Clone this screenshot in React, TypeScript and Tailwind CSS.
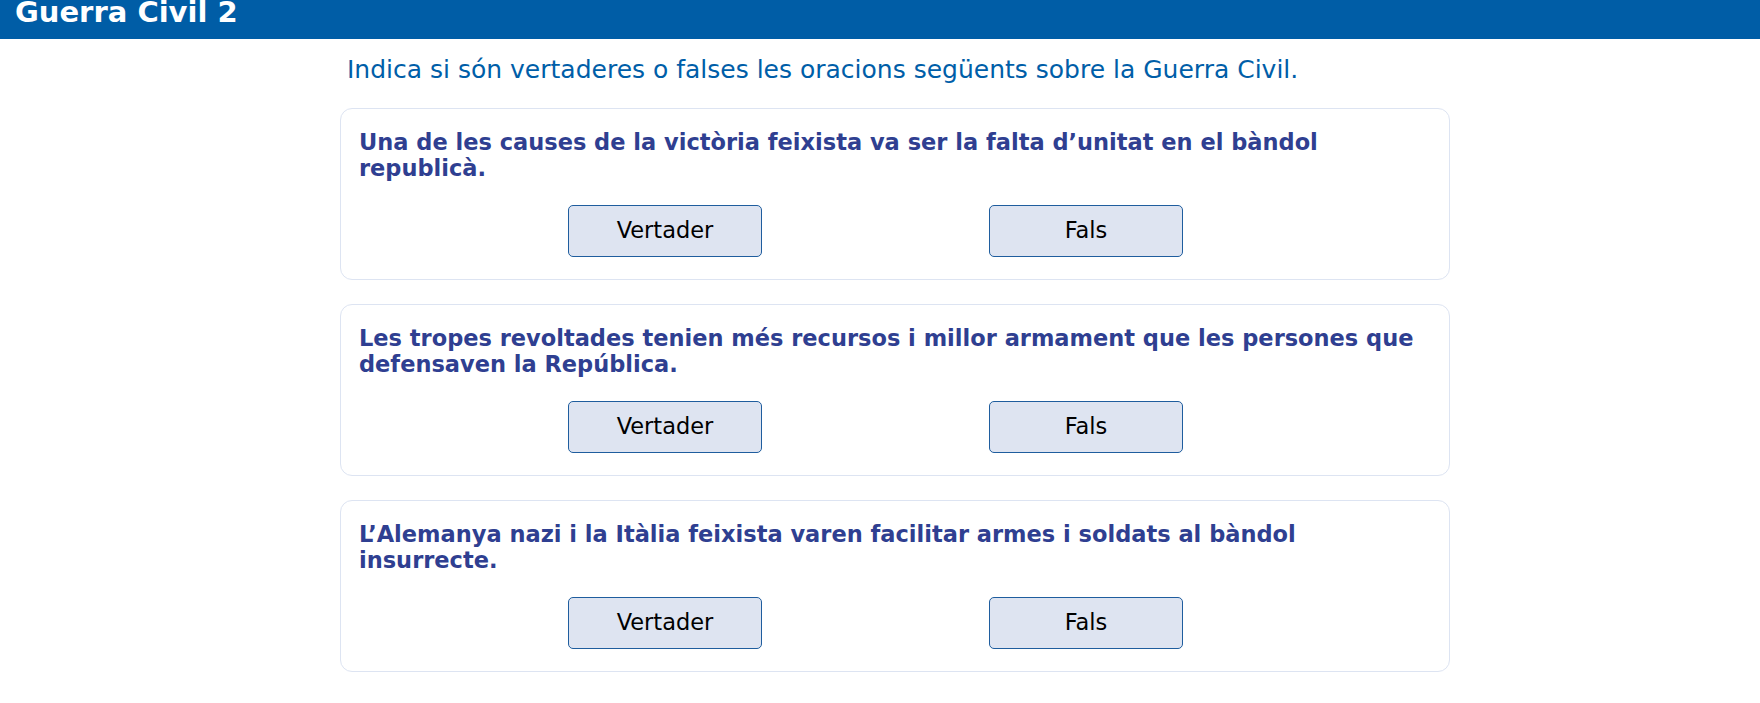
const QUESTIONS = [
  "Una de les causes de la victòria feixista va ser la falta d’unitat en el bàndol republicà.",
  "Les tropes revoltades tenien més recursos i millor armament que les persones que defensaven la República.",
  "L’Alemanya nazi i la Itàlia feixista varen facilitar armes i soldats al bàndol insurrecte.",
];

function AnswerButton({ label }: { label: string }) {
  return (
    <button
      type="button"
      className="h-[52px] w-[194px] rounded-[5px] border border-[#1f5d9e] bg-[#dee4f1] text-[22.5px] text-black"
    >
      {label}
    </button>
  );
}

function QuestionCard({ text }: { text: string }) {
  return (
    <div className="rounded-[12px] border border-[#dde4f2] bg-white px-[18px] pt-[20px] pb-[22px]">
      <p className="text-[22.5px] font-bold leading-[26px] text-[#2f3f91]">{text}</p>
      <div className="mt-[24px] flex gap-[227px] pl-[209px]">
        <AnswerButton label="Vertader" />
        <AnswerButton label="Fals" />
      </div>
    </div>
  );
}

export default function App() {
  return (
    <div
      className="min-h-screen bg-white"
      style={{ fontFamily: '"DejaVu Sans", Verdana, sans-serif' }}
    >
      <header className="h-[39px] overflow-hidden bg-[#005da6] px-[15px]">
        <h1 className="-mt-[2px] text-[29px] font-bold leading-[28px] text-white">Guerra Civil 2</h1>
      </header>

      <main className="ml-[340px] w-[1110px] pt-[16px]">
        <p className="pl-[7px] text-[25px] leading-[30px] text-[#005ea8]">
          Indica si són vertaderes o falses les oracions següents sobre la Guerra Civil.
        </p>
        <div className="mt-[23px] flex flex-col gap-[24px]">
          {QUESTIONS.map((q) => (
            <QuestionCard key={q} text={q} />
          ))}
        </div>
      </main>
    </div>
  );
}
